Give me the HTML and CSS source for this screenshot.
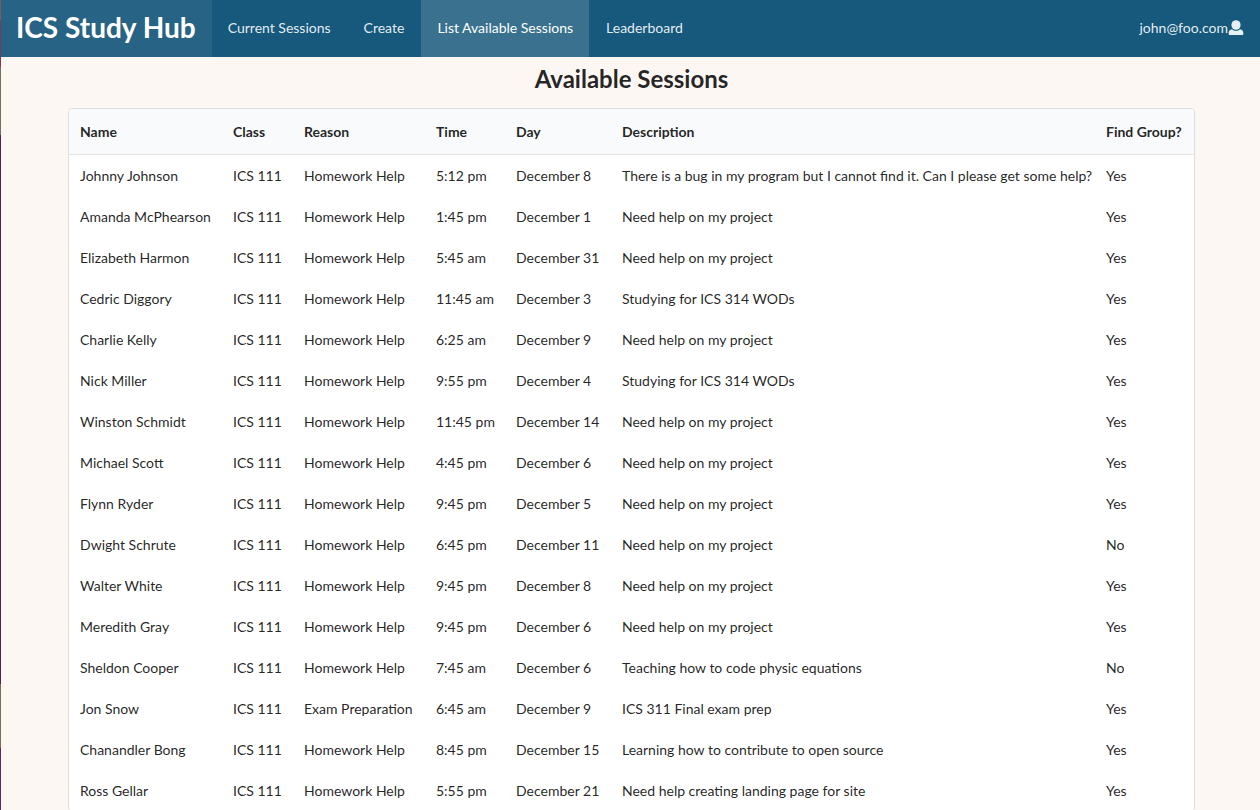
FILE: index.html
```html
<!DOCTYPE html>
<html lang="en">
<head>
<meta charset="utf-8">
<title>ICS Study Hub</title>
<link rel="stylesheet" href="styles.css">
</head>
<body>
<nav class="menu">
  <a class="item brand" href="#"><h1 class="brand-title">ICS Study Hub</h1></a>
  <div class="links">
    <a class="item" href="#">Current Sessions</a>
    <a class="item" href="#">Create</a>
    <a class="item active" href="#" aria-current="page">List Available Sessions</a>
    <a class="item" href="#">Leaderboard</a>
  </div>
  <button class="item account" type="button">john@foo.com<svg class="user-icon" viewBox="0 0 16 16" aria-hidden="true"><ellipse cx="8" cy="5" rx="4.6" ry="4.8"/><path d="M.6 13.6C.6 11 1.900 9.600 4 9.300c1.100 1 2.400 1.500 4 1.500s2.900-.5 4-1.500c2.100.3 3.400 1.700 3.400 4.300 0 1-.7 1.500-1.700 1.500H2.300c-1 0-1.700-.5-1.700-1.500z"/></svg></button>
</nav>
<main class="container">
  <h2 class="title">Available Sessions</h2>
  <table class="sessions">
    <colgroup><col class="c-name"><col class="c-class"><col class="c-reason"><col class="c-time"><col class="c-day"><col><col class="c-group"></colgroup>
    <thead>
      <tr><th scope="col">Name</th><th scope="col">Class</th><th scope="col">Reason</th><th scope="col">Time</th><th scope="col">Day</th><th scope="col">Description</th><th scope="col">Find Group?</th></tr>
    </thead>
    <tbody>
      <tr><td>Johnny Johnson</td><td>ICS 111</td><td>Homework Help</td><td>5:12 pm</td><td>December 8</td><td>There is a bug in my program but I cannot find it. Can I please get some help?</td><td>Yes</td></tr>
      <tr><td>Amanda McPhearson</td><td>ICS 111</td><td>Homework Help</td><td>1:45 pm</td><td>December 1</td><td>Need help on my project</td><td>Yes</td></tr>
      <tr><td>Elizabeth Harmon</td><td>ICS 111</td><td>Homework Help</td><td>5:45 am</td><td>December 31</td><td>Need help on my project</td><td>Yes</td></tr>
      <tr><td>Cedric Diggory</td><td>ICS 111</td><td>Homework Help</td><td>11:45 am</td><td>December 3</td><td>Studying for ICS 314 WODs</td><td>Yes</td></tr>
      <tr><td>Charlie Kelly</td><td>ICS 111</td><td>Homework Help</td><td>6:25 am</td><td>December 9</td><td>Need help on my project</td><td>Yes</td></tr>
      <tr><td>Nick Miller</td><td>ICS 111</td><td>Homework Help</td><td>9:55 pm</td><td>December 4</td><td>Studying for ICS 314 WODs</td><td>Yes</td></tr>
      <tr><td>Winston Schmidt</td><td>ICS 111</td><td>Homework Help</td><td>11:45 pm</td><td>December 14</td><td>Need help on my project</td><td>Yes</td></tr>
      <tr><td>Michael Scott</td><td>ICS 111</td><td>Homework Help</td><td>4:45 pm</td><td>December 6</td><td>Need help on my project</td><td>Yes</td></tr>
      <tr><td>Flynn Ryder</td><td>ICS 111</td><td>Homework Help</td><td>9:45 pm</td><td>December 5</td><td>Need help on my project</td><td>Yes</td></tr>
      <tr><td>Dwight Schrute</td><td>ICS 111</td><td>Homework Help</td><td>6:45 pm</td><td>December 11</td><td>Need help on my project</td><td>No</td></tr>
      <tr><td>Walter White</td><td>ICS 111</td><td>Homework Help</td><td>9:45 pm</td><td>December 8</td><td>Need help on my project</td><td>Yes</td></tr>
      <tr><td>Meredith Gray</td><td>ICS 111</td><td>Homework Help</td><td>9:45 pm</td><td>December 6</td><td>Need help on my project</td><td>Yes</td></tr>
      <tr><td>Sheldon Cooper</td><td>ICS 111</td><td>Homework Help</td><td>7:45 am</td><td>December 6</td><td>Teaching how to code physic equations</td><td>No</td></tr>
      <tr><td>Jon Snow</td><td>ICS 111</td><td>Exam Preparation</td><td>6:45 am</td><td>December 9</td><td>ICS 311 Final exam prep</td><td>Yes</td></tr>
      <tr><td>Chanandler Bong</td><td>ICS 111</td><td>Homework Help</td><td>8:45 pm</td><td>December 15</td><td>Learning how to contribute to open source</td><td>Yes</td></tr>
      <tr><td>Ross Gellar</td><td>ICS 111</td><td>Homework Help</td><td>5:55 pm</td><td>December 21</td><td>Need help creating landing page for site</td><td>Yes</td></tr>
    </tbody>
  </table>
</main>
</body>
</html>
```
FILE: styles.css
```css
* { box-sizing: border-box; }
body {
  margin: 0;
  padding-left: 1px;
  background: linear-gradient(#7a5c58 0 20px, #7a3a5c 20px 67px, #7a6e5c 67px 135px, #4f2548 135px 684px, #7a6e5c 684px 748px, #5c2a5c 748px) left top / 1px 100% no-repeat #fdf7f4;
  color: rgba(0, 0, 0, .87);
  font: 14px/18px Lato, "Liberation Sans", sans-serif;
}
.menu {
  display: flex;
  min-height: 57px;
  background: #16597d;
}
.links { display: flex; gap: 1px; }
.item {
  display: flex;
  align-items: center;
  padding: 0 16px 2px;
  border: 0;
  background: none;
  color: rgba(255, 255, 255, .9);
  font: inherit;
  text-decoration: none;
}
.brand { padding-left: 15px; background: #276385; color: #fff; }
.brand-title { margin: 0 0 2px; font-size: 28px; line-height: 36px; font-weight: 700; }
.active { background: #39718f; color: #fff; }
.account { margin-left: auto; }
.user-icon { width: 16px; height: 16px; fill: currentColor; }
.container { padding: 0 65px 0 67px; }
.title {
  margin: 0;
  padding: 7px 0 14px;
  font-size: 24px;
  line-height: 30px;
  font-weight: 700;
  text-align: center;
}
.sessions {
  width: 100%;
  table-layout: fixed;
  border: 1px solid #dededf;
  border-radius: 4px;
  border-collapse: separate;
  border-spacing: 0;
  background: #fff;
}
.c-name { width: 153px; }
.c-class { width: 71px; }
.c-reason { width: 132px; }
.c-time { width: 80px; }
.c-day { width: 106px; }
.c-group { width: 99px; }
th, td { padding: 11px; text-align: left; font-weight: 400; white-space: nowrap; }
td { height: 41px; }
th {
  height: 46px;
  background: #f9fafb;
  border-bottom: 1px solid #e1e2e3;
  font-weight: 700;
}
th:first-child { border-top-left-radius: 3px; }
th:last-child { border-top-right-radius: 3px; }
```
